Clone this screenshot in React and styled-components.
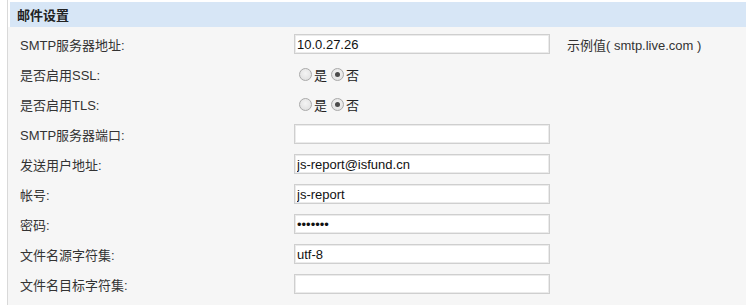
import React from 'react';
import styled, { createGlobalStyle } from 'styled-components';

const GlobalStyle = createGlobalStyle`
  html, body {
    margin: 0;
    padding: 0;
    background: #ffffff;
  }
  body {
    font-family: "Liberation Sans", Arial, "Noto Sans CJK SC", sans-serif;
    font-size: 13px;
    color: #333;
  }
`;

const Panel = styled.div`
  margin-left: 7px;
  padding-top: 2px;
  border-left: 1px solid #d9d9d9;
  height: 305px;
  box-sizing: border-box;
  background: #f6f6f6;
`;

const Header = styled.div`
  margin-top: -2px;
  border-top: 2px solid #fff;
  border-left: 2px solid #fff;
  height: 25px;
  padding-left: 7px;
  display: flex;
  align-items: center;
  background: #d7e6f6;
  font-family: "Noto Sans CJK SC", sans-serif;
  font-weight: bold;
  font-size: 13px;
  color: #222;
`;

const Form = styled.div`
  padding-top: 2px;
`;

const Row = styled.div`
  display: grid;
  grid-template-columns: 286px 256px auto;
  align-items: center;
  height: 30px;
`;

const Label = styled.div`
  padding-left: 12px;
  font-family: "Liberation Sans", Arial, "Noto Sans CJK SC", sans-serif;
  font-size: 13px;
  color: #333;
`;

const Input = styled.input`
  box-sizing: border-box;
  width: 256px;
  height: 20px;
  margin: 0;
  padding: 0 2px;
  border: 1px solid #cfcfcf;
  box-shadow: inset 0 0 0 1px #ebebeb;
  background: #fff;
  font-family: "Liberation Sans", Arial, sans-serif;
  font-size: 13px;
  color: #111;
  outline: none;
`;

const Hint = styled.div`
  padding-left: 17px;
  font-family: "Liberation Sans", Arial, "Noto Sans CJK SC", sans-serif;
  font-size: 13px;
  color: #333;
  white-space: nowrap;
`;

const RadioGroup = styled.div`
  display: flex;
  align-items: center;
  padding-left: 5px;
  font-family: "Noto Sans CJK SC", sans-serif;
  font-size: 13px;
  color: #222;
`;

const RadioOption = styled.label`
  display: flex;
  align-items: center;
  gap: 2px;
  margin-right: 4px;
`;

const RadioDot = styled.span`
  box-sizing: border-box;
  width: 13px;
  height: 13px;
  border-radius: 50%;
  border: 1px solid #a9a9a9;
  background: radial-gradient(circle at 50% 40%, #f4f4f4 0%, #dcdcdc 100%);
  display: flex;
  align-items: center;
  justify-content: center;
  &::after {
    content: '';
    display: ${(p) => (p.$checked ? 'block' : 'none')};
    width: 5px;
    height: 5px;
    border-radius: 50%;
    background: #4a4a4a;
  }
`;

const Radio = ({ options, value }) => (
  <RadioGroup>
    {options.map((o) => (
      <RadioOption key={o}>
        <RadioDot $checked={o === value} />
        {o}
      </RadioOption>
    ))}
  </RadioGroup>
);

const fields = [
  { label: 'SMTP服务器地址:', value: '10.0.27.26', hint: '示例值( smtp.live.com )' },
  { label: '是否启用SSL:', radio: '否' },
  { label: '是否启用TLS:', radio: '否' },
  { label: 'SMTP服务器端口:', value: '' },
  { label: '发送用户地址:', value: 'js-report@isfund.cn' },
  { label: '帐号:', value: 'js-report' },
  { label: '密码:', value: '1234567', type: 'password' },
  { label: '文件名源字符集:', value: 'utf-8' },
  { label: '文件名目标字符集:', value: '' },
];

export default function App() {
  return (
    <>
      <GlobalStyle />
      <Panel>
        <Header>邮件设置</Header>
        <Form>
          {fields.map((f) => (
            <Row key={f.label}>
              <Label>{f.label}</Label>
              {f.radio ? (
                <Radio options={['是', '否']} value={f.radio} />
              ) : (
                <Input type={f.type || 'text'} defaultValue={f.value} />
              )}
              {f.hint && <Hint>{f.hint}</Hint>}
            </Row>
          ))}
        </Form>
      </Panel>
    </>
  );
}
